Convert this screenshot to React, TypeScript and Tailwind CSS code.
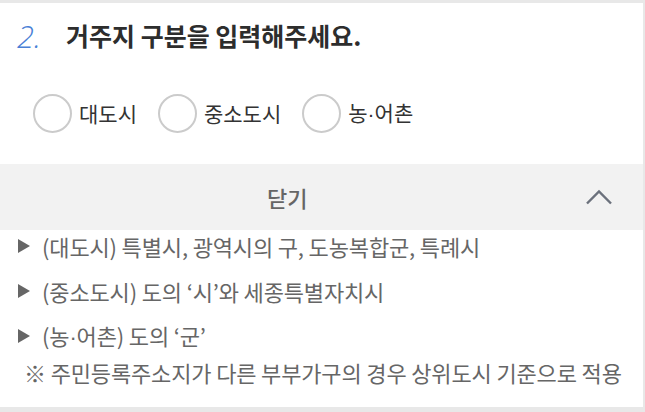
import React from "react";

const font = { fontFamily: '"Noto Sans CJK KR", "Noto Sans", sans-serif' };

const Dot = () => <span style={{ fontFamily: '"Liberation Sans", sans-serif' }}>·</span>;

const options: React.ReactNode[] = [
  "대도시",
  "중소도시",
  <>
    농<Dot />어촌
  </>,
];

const notes: React.ReactNode[] = [
  "(대도시) 특별시, 광역시의 구, 도농복합군, 특례시",
  "(중소도시) 도의 ‘시’와 세종특별자치시",
  <>
    (농<Dot />어촌) 도의 ‘군’
  </>,
];

const Bullet = () => (
  <svg width="12" height="14" viewBox="0 0 12 14" className="shrink-0">
    <path d="M0 0 L12 7 L0 14 Z" fill="#666" />
  </svg>
);

export default function App() {
  return (
    <div className="h-[412px] w-[645px] bg-[#e8e8e8] pt-[3px] pr-[2px] pb-[5px]" style={font}>
      <div className="h-full bg-white">
        {/* question */}
        <div className="flex h-[66px] items-center pl-[17px]">
          <span className="w-[49px] text-[31px] font-light italic leading-none text-[#4a80d6]" style={{ fontFamily: '"Open Sans", sans-serif' }}>
            2.
          </span>
          <h2 className="text-[25px] font-bold text-[#2d2d2d]">거주지 구분을 입력해주세요.</h2>
        </div>

        {/* radios */}
        <div className="flex h-[95px] items-start gap-[21px] pl-[33px] pt-[25px]">
          {options.map((o, i) => (
            <label key={i} className="flex items-center gap-[7px]">
              <span className="h-[39px] w-[39px] rounded-full border-2 border-[#cbcbcb] bg-white" />
              <span className="text-[21px] text-[#333]">{o}</span>
            </label>
          ))}
        </div>

        {/* toggle bar */}
        <div className="flex h-[66px] items-center bg-[#f2f2f2] pl-[267px] pr-[31px]">
          <span className="flex-1 text-[22px] font-medium text-[#666]">닫기</span>
          <svg width="26" height="16" viewBox="0 0 26 16" fill="none">
            <path d="M1 14.5 L13 2.5 L25 14.5" stroke="#6b717c" strokeWidth="2.4" />
          </svg>
        </div>

        {/* notes */}
        <ul className="flex flex-col gap-[13px] pl-[18px] text-[22px] tracking-[-0.15px] text-[#666]">
          {notes.map((n, i) => (
            <li key={i} className="flex h-[32px] items-center gap-[12px]">
              <Bullet />
              <span>{n}</span>
            </li>
          ))}
        </ul>
        <p className="mt-[4px] flex h-[32px] items-center pl-[24px] text-[22px] tracking-[-0.15px] text-[#666]">
          ※ 주민등록주소지가 다른 부부가구의 경우 상위도시 기준으로 적용
        </p>
      </div>
    </div>
  );
}
